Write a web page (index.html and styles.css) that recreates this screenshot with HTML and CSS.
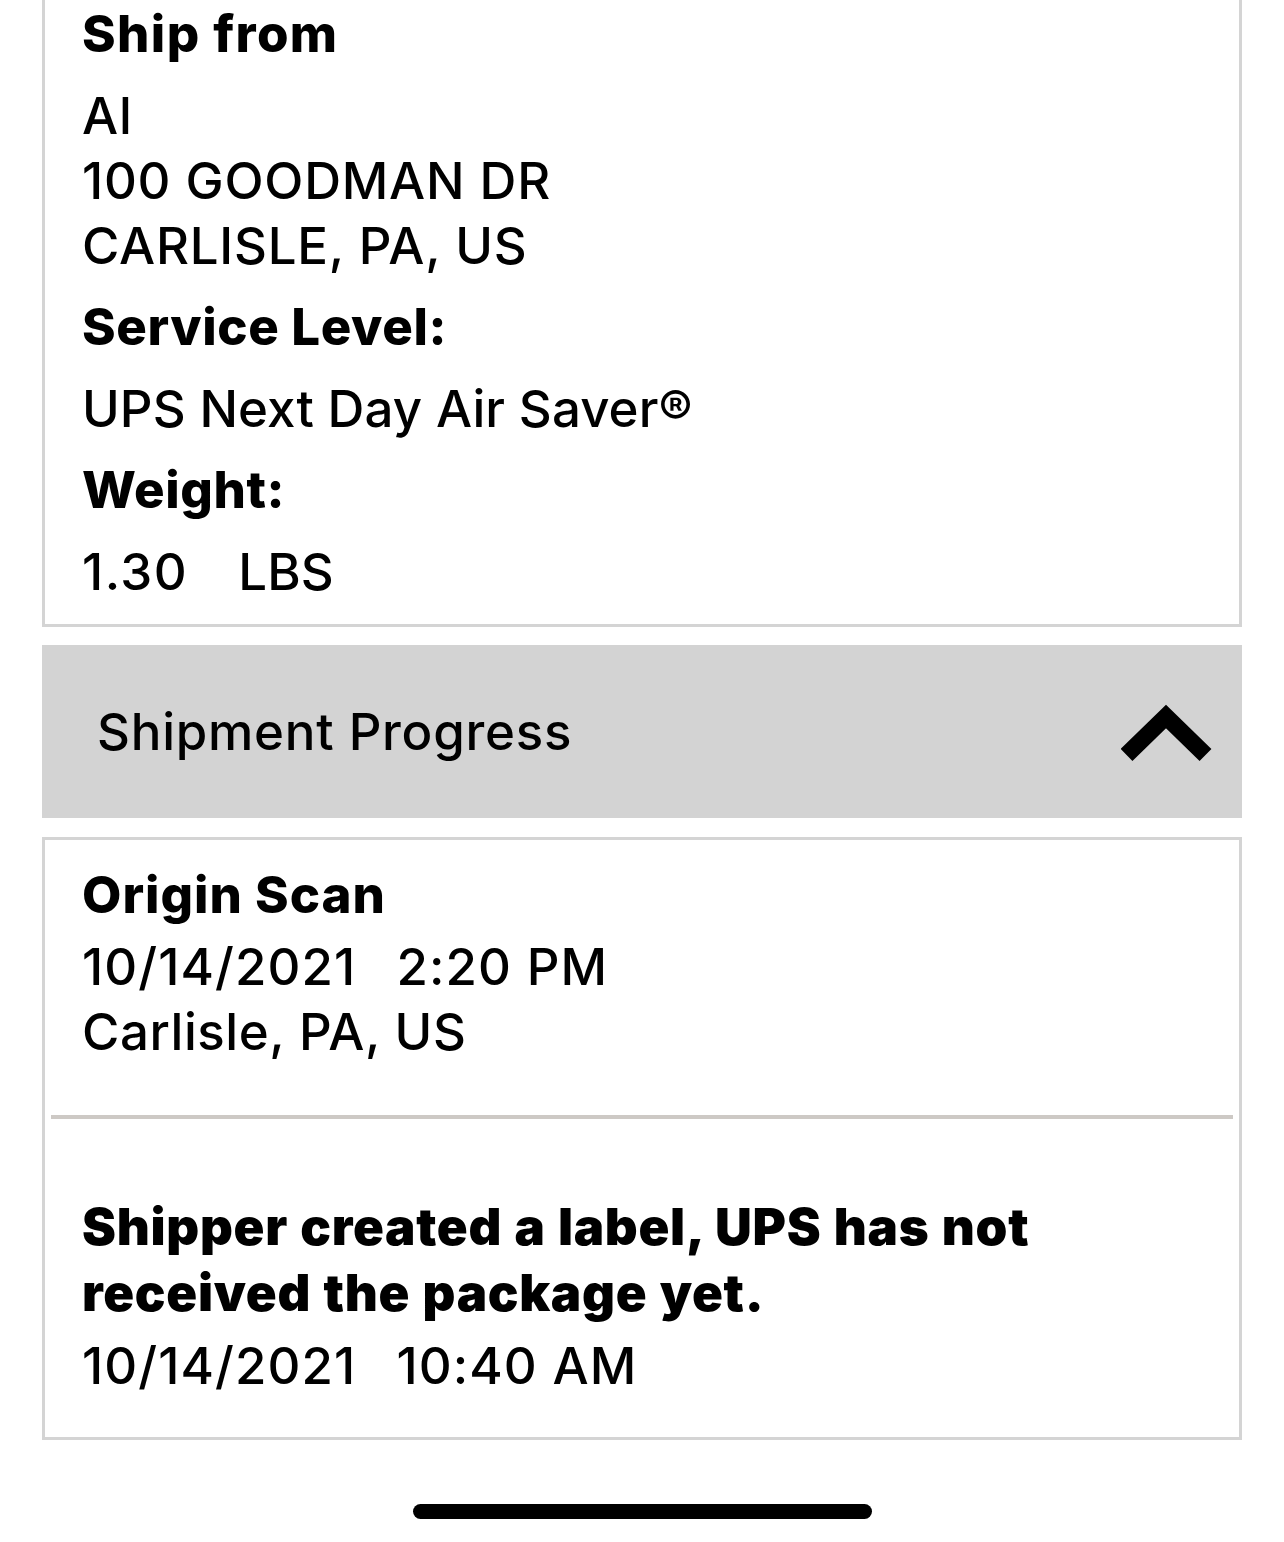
FILE: index.html
```html
<!DOCTYPE html>
<html lang="en">
<head>
<meta charset="utf-8">
<title>Shipment Details</title>
<link rel="stylesheet" href="styles.css">
</head>
<body>
<main class="page">
  <section class="card card-details">
    <div class="item bold heading">Ship from</div>
    <div class="item address">
      <div>Al</div>
      <div>100 GOODMAN DR</div>
      <div>CARLISLE, PA, US</div>
    </div>
    <div class="item bold">Service Level:</div>
    <div class="item">UPS Next Day Air Saver®</div>
    <div class="item bold">Weight:</div>
    <div class="item"><span class="num">1.30</span><span class="unit">LBS</span></div>
  </section>

  <section class="accordion-head">
    <span class="accordion-title">Shipment Progress</span>
    <svg class="chevron" width="96" height="60" viewBox="0 0 96 60" aria-hidden="true">
      <polyline points="5.5,51 45,12.5 84.5,51" fill="none" stroke="#000" stroke-width="17" stroke-linejoin="miter" stroke-miterlimit="4"/>
    </svg>
  </section>

  <section class="card card-progress">
    <div class="event event-first">
      <div class="event-title">Origin Scan</div>
      <div class="event-time"><span>10/14/2021</span><span>2:20 PM</span></div>
      <div class="event-place">Carlisle, PA, US</div>
    </div>
    <hr class="divider">
    <div class="event event-last">
      <div class="event-title heavy">Shipper created a label, UPS has not received the package yet.</div>
      <div class="event-time"><span>10/14/2021</span><span>10:40 AM</span></div>
    </div>
  </section>

  <div class="home-indicator"></div>
</main>
</body>
</html>
```

FILE: styles.css
```css
html, body {
  margin: 0;
  padding: 0;
  background: #ffffff;
}

body {
  font-family: "Inter", "Noto Sans", "Liberation Sans", sans-serif;
  color: #000;
  font-size: 51px;
  font-weight: 500;
  line-height: 65px;
  letter-spacing: 0.1px;
  overflow: hidden;
}

.page {
  padding: 0 42px;
  display: flex;
  flex-direction: column;
}

.card {
  border: 3px solid #d4d4d4;
  background: #fff;
}

.card-details {
  margin-top: -22px;
  padding: 20px 37px 20px 37px;
  display: flex;
  flex-direction: column;
  gap: 16.5px;
}

.bold {
  font-weight: 800;
  letter-spacing: 0.6px;
}

.heading {
  letter-spacing: 1.4px;
}

.address {
  letter-spacing: 0.75px;
}

.num {
  margin-right: 50px;
  letter-spacing: 1.5px;
}

.accordion-head {
  margin-top: 18px;
  height: 173px;
  background: #d3d3d3;
  display: flex;
  align-items: center;
  justify-content: space-between;
  padding: 0 25px 0 55px;
}

.accordion-title {
  font-weight: 500;
  letter-spacing: 0.75px;
}

.chevron {
  display: block;
  margin-top: 6px;
}

.card-progress {
  margin-top: 19px;
  padding: 0 6px 39px 6px;
}

.event {
  padding: 0 31px;
}

.event-first {
  padding-top: 22px;
}

.event-title {
  font-weight: 800;
  letter-spacing: 1px;
}

.event-first .event-title {
  margin-bottom: 7px;
}

.event-time {
  letter-spacing: 1.1px;
}

.event-time span + span {
  margin-left: 40px;
}

.event-place {
  letter-spacing: 0.55px;
}

.divider {
  margin: 51px 0 75px 0;
  border: 0;
  height: 4px;
  background: #cdc9c5;
}

.heavy {
  font-weight: 900;
  letter-spacing: 0.7px;
  word-spacing: 1.5px;
  line-height: 66px;
  margin-bottom: 7px;
}

.home-indicator {
  align-self: center;
  margin-top: 64px;
  width: 459px;
  height: 15px;
  border-radius: 8px;
  background: #000;
}
```
